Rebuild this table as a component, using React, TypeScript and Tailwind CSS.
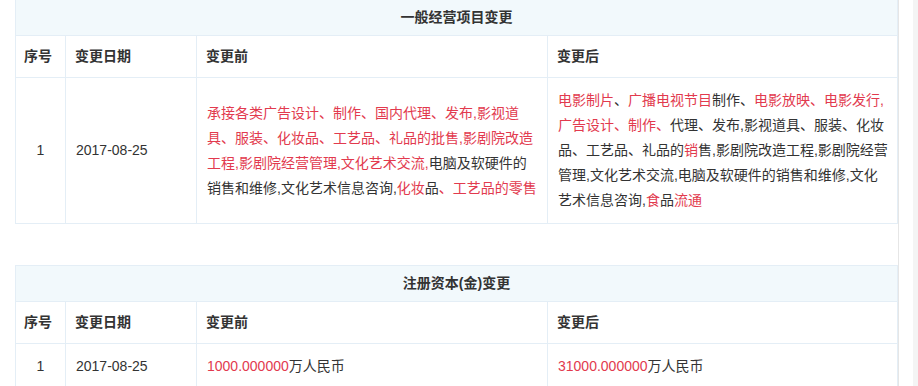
import React from "react";

const R = ({ children }: { children: React.ReactNode }) => (
  <span className="text-[#e23a4e]">{children}</span>
);

function Title({ text }: { text: string }) {
  return (
    <div className="col-span-4 h-[36px] flex items-center justify-center bg-[#f2f9fc] border-r border-b border-[#e4eef6] font-bold text-[#333]">
      {text}
    </div>
  );
}

function Head() {
  const cls = "h-[42px] flex items-center border-r border-b border-[#e4eef6] font-bold text-[#333]";
  return (
    <>
      <div className={cls + " pl-[8px]"}>序号</div>
      <div className={cls + " pl-[9px]"}>变更日期</div>
      <div className={cls + " pl-[9px]"}>变更前</div>
      <div className={cls + " pl-[9px]"}>变更后</div>
    </>
  );
}

export default function App() {
  const cell = "border-r border-b border-[#e4eef6] flex items-center text-[#333]";
  return (
    <div className="w-[918px] min-h-[386px] bg-[#f4f4f4] flex font-['Liberation_Sans','Noto_Sans_CJK_SC',sans-serif] text-[14px] leading-[25px]">
      <div className="w-[913px] bg-white pl-[15px]">
        <div className="w-[884px] min-h-[386px] border-r border-[#e6e6e6]">
          <div className="-mt-[1px] grid grid-cols-[50px_131px_351px_350px] border-l border-t border-[#e4eef6]">
            <Title text="一般经营项目变更" />
            <Head />
            <div className={cell + " justify-center"}>1</div>
            <div className={cell + " pl-[10px]"}>2017-08-25</div>
            <div className={cell + " pl-[10px] pr-[8px] py-[10px]"}>
              <div>
                <R>承接各类广告设计、制作、国内代理、发布,影视道具、服装、化妆品、工艺品、礼品的批售,影剧院改造工程,影剧院经营管理,文化艺术交流,</R>
                电脑及软硬件的销售和维修,文化艺术信息咨询,
                <R>化妆</R>品<R>、工艺品的零售</R>
              </div>
            </div>
            <div className={cell + " pl-[10px] pr-[7px] py-[10px]"}>
              <div>
                <R>电影制片</R>、<R>广播电视节目</R>制作、<R>电影放映、电影发行,广告设计、制作、</R>代理、发布,影视道具、服装、化妆品、工艺品、礼品的<R>销</R>售,影剧院改造工程,影剧院经营管理,文化艺术交流,电脑及软硬件的销售和维修,文化艺术信息咨询,<R>食</R>品<R>流通</R>
              </div>
            </div>
          </div>

          <div className="mt-[41px] grid grid-cols-[50px_131px_351px_350px] border-l border-t border-[#e4eef6]">
            <Title text="注册资本(金)变更" />
            <Head />
            <div className={cell + " justify-center py-[10px]"}>1</div>
            <div className={cell + " pl-[10px] py-[10px]"}>2017-08-25</div>
            <div className={cell + " pl-[10px] py-[10px]"}>
              <div>
                <R>1000.000000</R>万人民币
              </div>
            </div>
            <div className={cell + " pl-[10px] py-[10px]"}>
              <div>
                <R>31000.000000</R>万人民币
              </div>
            </div>
          </div>
        </div>
      </div>
    </div>
  );
}
